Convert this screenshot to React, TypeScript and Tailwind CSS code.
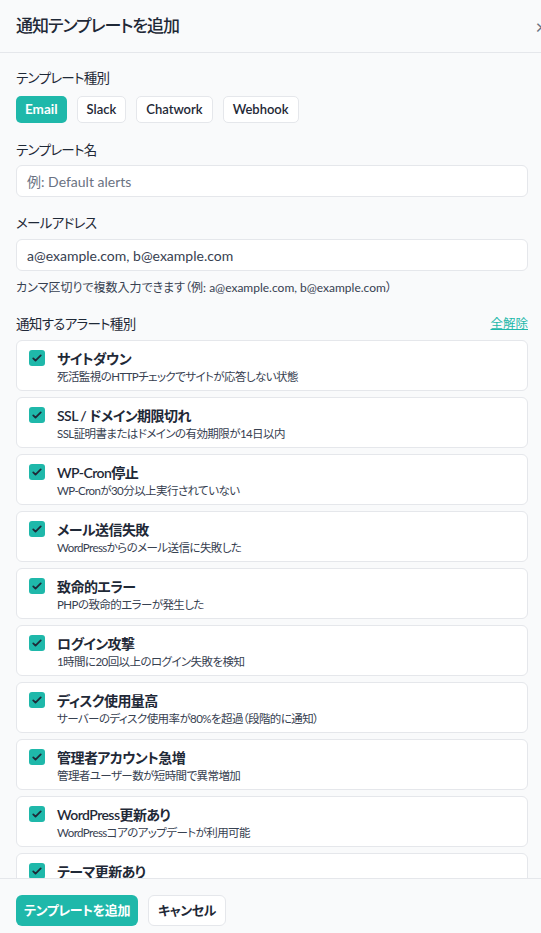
import React from "react";

const alerts = [
  { title: "サイトダウン", desc: "死活監視のHTTPチェックでサイトが応答しない状態" },
  { title: "SSL / ドメイン期限切れ", desc: "SSL証明書またはドメインの有効期限が14日以内" },
  { title: "WP-Cron停止", desc: "WP-Cronが30分以上実行されていない" },
  { title: "メール送信失敗", desc: "WordPressからのメール送信に失敗した" },
  { title: "致命的エラー", desc: "PHPの致命的エラーが発生した" },
  { title: "ログイン攻撃", desc: "1時間に20回以上のログイン失敗を検知" },
  { title: "ディスク使用量高", desc: "サーバーのディスク使用率が80%を超過（段階的に通知）" },
  { title: "管理者アカウント急増", desc: "管理者ユーザー数が短時間で異常増加" },
  { title: "WordPress更新あり", desc: "WordPressコアのアップデートが利用可能" },
  { title: "テーマ更新あり", desc: "テーマのアップデートが利用可能" },
];

function Check() {
  return (
    <span className="mt-[1px] flex h-4 w-4 shrink-0 items-center justify-center rounded-[3px] bg-[#1fb8aa]">
      <svg viewBox="0 0 16 16" className="h-3 w-3" fill="none">
        <path d="M3 8.5l3 3 7-7" stroke="#1f2937" strokeWidth="2.4" strokeLinecap="round" strokeLinejoin="round" />
      </svg>
    </span>
  );
}

export default function App() {
  const types = ["Email", "Slack", "Chatwork", "Webhook"];
  return (
    <div
      className="flex h-screen flex-col overflow-hidden bg-[#f9fafb] text-[#1f2937] [font-feature-settings:'palt']"
      style={{ fontFamily: '"Lato", "Noto Sans CJK JP", sans-serif' }}
    >
      <div className="flex h-[53px] shrink-0 items-center justify-between border-b border-[#e5e7eb] pl-4">
        <h1 className="text-[17px] font-medium tracking-[-0.06em]">通知テンプレートを追加</h1>
        <span className="mr-[-6px] text-[20px] leading-none text-gray-500">×</span>
      </div>

      <div className="flex-1 overflow-hidden pl-4 pr-[13px] pt-[15px]">
        <p className="text-[13.5px] leading-5 tracking-[-0.05em]">テンプレート種別</p>
        <div className="mt-[8px] flex gap-[10px]">
          {types.map((t) => (
            <button
              key={t}
              className={
                t === "Email"
                  ? "h-[27px] rounded-[5px] bg-[#1fb8aa] px-[9px] text-[13.5px] font-bold text-white"
                  : "h-[27px] rounded-[5px] border border-[#e5e7eb] bg-white px-[9px] text-[13px] font-semibold"
              }
            >
              {t}
            </button>
          ))}
        </div>

        <p className="mt-[17px] text-[13.5px] leading-5 tracking-[-0.05em]">テンプレート名</p>
        <div className="mt-[5px] flex h-[32px] items-center rounded-[6px] border border-[#e5e7eb] bg-white px-[10px] text-[14px] text-gray-500">
          例: Default alerts
        </div>

        <p className="mt-[16px] text-[13.5px] leading-5 tracking-[-0.05em]">メールアドレス</p>
        <div className="mt-[6px] flex h-[32px] items-center rounded-[6px] border border-[#e5e7eb] bg-white px-[10px] text-[14px] text-[#374151]">
          a@example.com, b@example.com
        </div>
        <p className="mt-[9px] text-[12px] leading-4 text-[#374151]">
          カンマ区切りで複数入力できます（例: a@example.com, b@example.com）
        </p>

        <div className="mt-[18px] flex items-center justify-between">
          <p className="text-[13.5px] leading-5 tracking-[-0.05em]">通知するアラート種別</p>
          <span className="text-[12.5px] text-[#1fb8aa] underline">全解除</span>
        </div>

        <div className="mt-[6px] flex flex-col gap-[6px]">
          {alerts.map((a) => (
            <div
              key={a.title}
              className="flex h-[51px] shrink-0 items-start gap-[12px] rounded-[6px] border border-[#e5e7eb] bg-white px-[12px] pt-[8px]"
            >
              <Check />
              <div>
                <p className="text-[14px] font-semibold leading-5 tracking-[-0.04em]">{a.title}</p>
                <p className="text-[11.5px] leading-4 tracking-[-0.05em] text-[#374151]">{a.desc}</p>
              </div>
            </div>
          ))}
        </div>
      </div>

      <div className="flex h-[55px] shrink-0 items-start gap-[10px] border-t border-[#e5e7eb] px-4 pt-[16px]">
        <button className="h-[31px] rounded-[6px] bg-[#1fb8aa] px-[8px] text-[13px] font-bold tracking-[-0.03em] text-white">
          テンプレートを追加
        </button>
        <button className="h-[31px] rounded-[6px] border border-[#e5e7eb] bg-white px-[9px] text-[13px] font-semibold tracking-[-0.03em]">
          キャンセル
        </button>
      </div>
    </div>
  );
}
